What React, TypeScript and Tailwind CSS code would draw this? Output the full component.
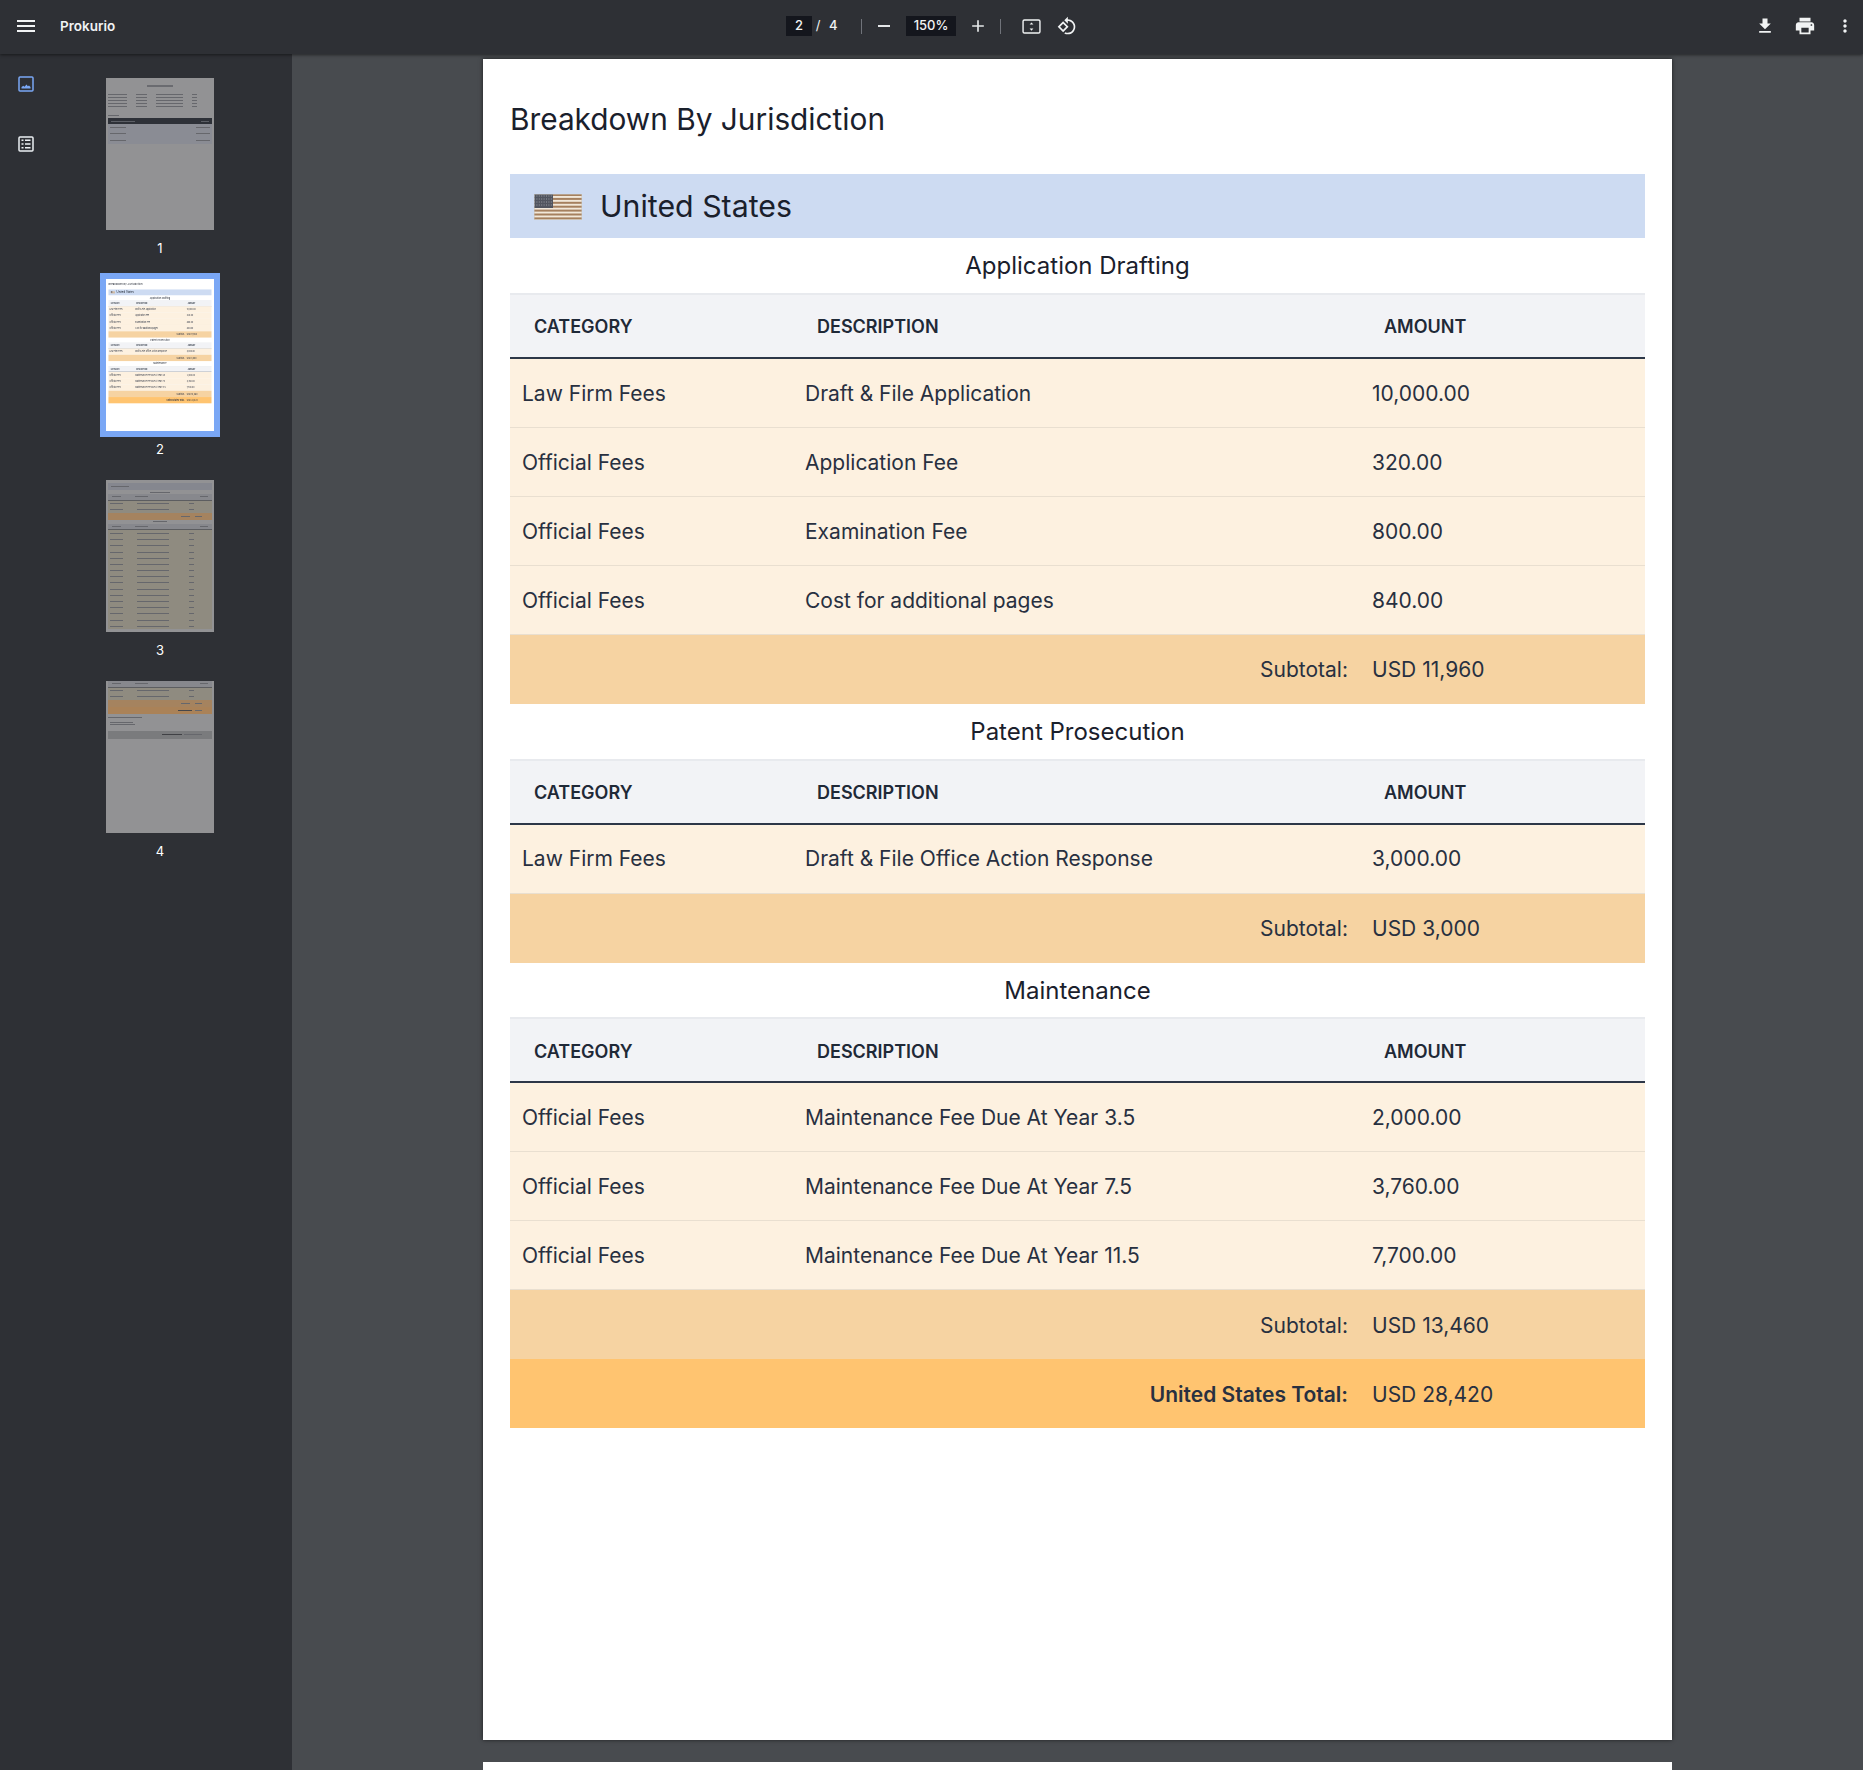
const font = "font-['Inter',sans-serif]";

const sections = [
  {
    title: "Application Drafting",
    rows: [
      ["Law Firm Fees", "Draft & File Application", "10,000.00"],
      ["Official Fees", "Application Fee", "320.00"],
      ["Official Fees", "Examination Fee", "800.00"],
      ["Official Fees", "Cost for additional pages", "840.00"],
    ],
    subtotal: "USD 11,960",
  },
  {
    title: "Patent Prosecution",
    rows: [["Law Firm Fees", "Draft & File Office Action Response", "3,000.00"]],
    subtotal: "USD 3,000",
  },
  {
    title: "Maintenance",
    rows: [
      ["Official Fees", "Maintenance Fee Due At Year 3.5", "2,000.00"],
      ["Official Fees", "Maintenance Fee Due At Year 7.5", "3,760.00"],
      ["Official Fees", "Maintenance Fee Due At Year 11.5", "7,700.00"],
    ],
    subtotal: "USD 13,460",
  },
];

const cols = "grid grid-cols-[283px_567px_285px]";

function Icon({ d, className }: { d: string; className?: string }) {
  return (
    <svg viewBox="0 0 24 24" fill="currentColor" className={className}>
      <path d={d} />
    </svg>
  );
}

function Flag() {
  const stripes = [0, 1, 2, 3, 4, 5, 6];
  return (
    <svg viewBox="0 0 48 26" className="h-[26px] w-[48px] shrink-0">
      <rect width="48" height="26" fill="#f1e8da" />
      {stripes.map((i) => (
        <rect key={i} y={i * 3.9} width="48" height="2" fill="#a5805f" />
      ))}
      <rect width="19" height="14" fill="#51555f" />
      <path d="M0 2h19M0 5h19M0 8h19M0 11h19" stroke="#9a9ca3" strokeWidth="1" strokeDasharray="1 1.4" />
      <rect x="0.25" y="0.25" width="47.5" height="25.5" fill="none" stroke="#c7c4bd" strokeWidth="0.5" />
    </svg>
  );
}

function Section({ title, rows, subtotal }: (typeof sections)[number]) {
  return (
    <div>
      <h3 className="flex h-[54.75px] items-center justify-center pt-[2px] text-[24px] text-[#1a202c]">{title}</h3>
      <div className={`${cols} h-[66px] items-center border-t-2 border-b-2 border-t-[#e8eaee] border-b-[#2d3748] bg-[#f2f3f6] pt-[2px] text-[18px] font-semibold text-[#1f2937]`}>
        <div className="px-6">CATEGORY</div>
        <div className="px-6">DESCRIPTION</div>
        <div className="px-6">AMOUNT</div>
      </div>
      {rows.map((row, i) => (
        <div key={i} className={`${cols} h-[69px] items-center border-b border-[#e9dfd0] bg-[#fdf1e0] pt-[1px] text-[21px] text-[#283040]`}>
          <div className="px-3">{row[0]}</div>
          <div className="px-3">{row[1]}</div>
          <div className="px-3">{row[2]}</div>
        </div>
      ))}
      <div className={`${cols} h-[69px] items-center bg-[#f6d3a2] pt-[1px] text-[21px] text-[#283040]`}>
        <div className="col-span-2 px-3 text-right">Subtotal:</div>
        <div className="px-3">{subtotal}</div>
      </div>
    </div>
  );
}

function Report() {
  return (
    <div className={`h-[1681px] w-[1189px] shrink-0 bg-white px-[27px] pt-[42px] ${font}`}>
      <h1 className="mb-[37px] h-9 text-[29.8px] leading-9 text-[#1a202c]">Breakdown By Jurisdiction</h1>
      <div className="flex h-16 items-center gap-[18px] bg-[#cddbf2] px-6 pt-[2px]">
        <Flag />
        <h2 className="text-[30.3px] text-[#1a202c]">United States</h2>
      </div>
      {sections.map((s) => (
        <Section key={s.title} {...s} />
      ))}
      <div className={`${cols} h-[69px] items-center bg-[#ffc470] pt-[1px] text-[21px] text-[#283040]`}>
        <div className="col-span-2 px-3 text-right font-semibold">United States Total:</div>
        <div className="px-3">USD 28,420</div>
      </div>
    </div>
  );
}

function Bar({ w }: { w: string }) {
  return <div className={`h-px bg-[#66676c] blur-[0.3px] ${w}`} />;
}

function MiniHead() {
  return (
    <div className="flex h-[6.5px] items-center gap-[14px] border-b border-[#5c5d60] bg-[#87888d] px-[4px]">
      <Bar w="w-[10px]" />
      <Bar w="w-[14px]" />
      <div className="ml-[38px] w-[8px]">
        <Bar w="w-[8px]" />
      </div>
    </div>
  );
}

function MiniRow({ h = "h-[6.2px]" }: { h?: string }) {
  return (
    <div className={`flex items-center bg-[#8f8b80] px-[2px] ${h}`}>
      <div className="w-[27px]">
        <Bar w="w-[13px]" />
      </div>
      <div className="w-[52px]">
        <Bar w="w-[32px]" />
      </div>
      <Bar w="w-[5px]" />
    </div>
  );
}

function Thumb1() {
  const fields = [0, 1, 2, 3, 4];
  return (
    <div className="flex h-[152px] w-[108px] flex-col bg-[#929294] px-[2px] pt-[7px]">
      <div className="mb-[6px] flex justify-center">
        <div className="h-[2px] w-[26px] bg-[#6a6b70] blur-[0.4px]" />
      </div>
      {fields.map((i) => (
        <div key={i} className="flex h-[3px] items-center">
          <div className="w-[28px]">
            <Bar w="w-[19px]" />
          </div>
          <div className="w-[20px]">
            <Bar w="w-[11px]" />
          </div>
          <div className="w-[36px]">
            <Bar w="w-[27px]" />
          </div>
          <Bar w="w-[5px]" />
        </div>
      ))}
      <div className="mt-[7px] mb-[2px]">
        <Bar w="w-[11px]" />
      </div>
      <div className="flex h-[6px] items-center justify-between bg-[#2e3138] px-[3px]">
        <div className="h-px w-[24px] bg-[#5c5f66]" />
        <div className="h-px w-[8px] bg-[#5c5f66]" />
      </div>
      <div className="flex h-[20px] flex-col justify-around bg-[#8a8c94] px-[2px]">
        {[0, 1, 2].map((i) => (
          <div key={i} className="flex items-center justify-between">
            <Bar w="w-[16px]" />
            <Bar w="w-[14px]" />
          </div>
        ))}
      </div>
    </div>
  );
}

function Thumb3() {
  const rows = Array.from({ length: 16 }, (_, i) => i);
  return (
    <div className="flex h-[152px] w-[108px] flex-col bg-[#929294] px-[2px] pt-[3px]">
      <div className="flex h-[7px] items-center bg-[#85878f] px-[3px]">
        <Bar w="w-[18px]" />
      </div>
      <div className="flex h-[4px] items-center justify-center">
        <Bar w="w-[20px]" />
      </div>
      <MiniHead />
      <MiniRow />
      <MiniRow />
      <div className="flex h-[7px] items-center justify-end gap-[5px] bg-[#a5835f] px-[10px]">
        <Bar w="w-[9px]" />
        <Bar w="w-[7px]" />
      </div>
      <div className="flex h-[4px] items-center justify-center">
        <Bar w="w-[14px]" />
      </div>
      <MiniHead />
      {rows.map((i) => (
        <MiniRow key={i} />
      ))}
    </div>
  );
}

function Thumb4() {
  return (
    <div className="flex h-[152px] w-[108px] flex-col bg-[#929294] px-[2px]">
      <MiniHead />
      <MiniRow />
      <MiniRow />
      <div className="flex h-[7px] items-center justify-end gap-[5px] bg-[#a5835f] px-[10px]">
        <Bar w="w-[9px]" />
        <Bar w="w-[7px]" />
      </div>
      <div className="flex h-[7px] items-center justify-end gap-[3px] bg-[#aa8258] px-[10px]">
        <div className="h-px w-[14px] bg-[#45464a]" />
        <Bar w="w-[7px]" />
      </div>
      <div className="mt-[3px]">
        <Bar w="w-[34px]" />
      </div>
      <div className="mt-[4px] ml-[2px] flex flex-col gap-[1px]">
        <Bar w="w-[23px]" />
        <Bar w="w-[25px]" />
      </div>
      <div className="mt-[6px] flex h-[8px] items-center justify-end gap-[2px] bg-[#7a7b7d] px-[10px]">
        <div className="h-px w-[20px] bg-[#404145]" />
        <Bar w="w-[18px]" />
      </div>
    </div>
  );
}

function Thumbnail({ label, children }: { label: string; children: React.ReactNode }) {
  return (
    <div className="flex flex-col items-center">
      <div className="overflow-hidden">{children}</div>
      <div className="mt-[9px] h-[18px] text-[13px] leading-[18px] text-white">{label}</div>
    </div>
  );
}

function Sidebar() {
  return (
    <div className={`flex w-[292px] shrink-0 bg-[#2e3035] ${font}`}>
      <div className="flex w-[52px] flex-col items-center gap-[40px] pt-[20px]">
        <svg viewBox="0 0 20 20" className="h-5 w-5 text-[#7aa7f5]" fill="none">
          <rect x="3" y="3" width="14" height="14" rx="1" stroke="currentColor" strokeWidth="1.5" />
          <path d="M5.5 14.5v-1.6l1.8-1.2 1.2 1 2-2.2 1.3 1.8 1.2-.8 1.5 1.4v1.6z" fill="currentColor" />
        </svg>
        <svg viewBox="0 0 20 20" className="h-5 w-5 text-[#eceff3]" fill="none">
          <rect x="3" y="3" width="14" height="14" rx="1" stroke="currentColor" strokeWidth="1.5" />
          <path d="M5.5 6.2h2M9 6.2h5.5M5.5 10h2M9 10h5.5M5.5 13.8h2M9 13.8h5.5" stroke="currentColor" strokeWidth="1.5" />
        </svg>
      </div>
      <div className="flex flex-1 flex-col items-center gap-[22px] pt-[24px] pr-[24px]">
        <Thumbnail label="1">
          <Thumb1 />
        </Thumbnail>
        <div className="flex flex-col items-center">
          <div className="-mt-[6px] border-[6px] border-[#7aa7f5]">
            <div className="h-[152px] w-[108px] overflow-hidden bg-white">
              <div className="origin-top-left scale-[0.0908] blur-[5px]">
                <Report />
              </div>
            </div>
          </div>
          <div className="mt-[3px] h-[18px] text-[13px] leading-[18px] text-white">2</div>
        </div>
        <Thumbnail label="3">
          <Thumb3 />
        </Thumbnail>
        <Thumbnail label="4">
          <Thumb4 />
        </Thumbnail>
      </div>
    </div>
  );
}

function Toolbar() {
  return (
    <div className={`relative z-10 grid h-[54px] shrink-0 grid-cols-[1fr_auto_1fr] items-center bg-[#2e3035] pb-[2px] text-[13px] text-[#f1f3f4] shadow-[0_1px_3px_rgba(0,0,0,0.5)] ${font}`}>
      <div className="flex items-center pl-[14px]">
        <Icon className="h-6 w-6" d="M3 18h18v-2H3v2zm0-5h18v-2H3v2zm0-7v2h18V6H3z" />
        <span className="ml-[22px] text-[13.5px] font-semibold">Prokurio</span>
      </div>
      <div className="flex items-center">
        <div className="flex h-5 w-[26px] items-center justify-center bg-[#14161d] font-medium">2</div>
        <span className="w-[12px] text-center">/</span>
        <span className="ml-[5px] w-[8px] font-medium">4</span>
        <div className="mr-[16px] ml-[24px] h-[15px] w-px bg-[#70737a]" />
        <div className="h-[2px] w-[12px] bg-[#e4e6e8]" />
        <div className="ml-[16px] flex h-5 w-[50px] items-center justify-center bg-[#14161d] font-medium">150%</div>
        <Icon className="mx-[12px] h-5 w-5 text-[#e4e6e8]" d="M19 13h-6v6h-2v-6H5v-2h6V5h2v6h6v2z" />
        <div className="mr-[21px] h-[15px] w-px bg-[#70737a]" />
        <svg viewBox="0 0 20 16" className="h-[15px] w-[19px]" fill="none">
          <rect x="1" y="1" width="18" height="14" rx="1.5" stroke="currentColor" strokeWidth="1.5" />
          <path d="M10 3.6l2 2.2H8zM10 12.4l-2-2.2h4z" fill="currentColor" />
        </svg>
        <Icon className="ml-[16px] h-5 w-5" d="M7.34 6.41L.86 12.9l6.49 6.48 6.49-6.48-6.5-6.49zM3.69 12.9l3.66-3.66L11 12.9l-3.66 3.66-3.65-3.66zm15.67-6.26C17.61 4.88 15.3 4 13 4V.76L8.76 5 13 9.24V6c1.79 0 3.58.68 4.95 2.05 2.73 2.73 2.73 7.17 0 9.9C16.58 19.32 14.79 20 13 20c-.97 0-1.94-.21-2.84-.61l-1.49 1.49C10.02 21.62 11.51 22 13 22c2.3 0 4.61-.88 6.36-2.64 3.52-3.51 3.52-9.21 0-12.72z" />
      </div>
      <div className="flex items-center justify-end pr-[8px]">
        <Icon className="h-5 w-5" d="M19 9h-4V3H9v6H5l7 7 7-7zM5 18v2h14v-2H5z" />
        <Icon className="ml-[19px] h-[22px] w-[22px]" d="M19 8H5c-1.66 0-3 1.34-3 3v6h4v4h12v-4h4v-6c0-1.66-1.34-3-3-3zm-3 11H8v-5h8v5zm3-7c-.55 0-1-.45-1-1s.45-1 1-1 1 .45 1 1-.45 1-1 1zm-1-9H6v4h12V3z" />
        <Icon className="ml-[19px] h-5 w-5" d="M12 8c1.1 0 2-.9 2-2s-.9-2-2-2-2 .9-2 2 .9 2 2 2zm0 2c-1.1 0-2 .9-2 2s.9 2 2 2 2-.9 2-2-.9-2-2-2zm0 6c-1.1 0-2 .9-2 2s.9 2 2 2 2-.9 2-2-.9-2-2-2z" />
      </div>
    </div>
  );
}

export default function App() {
  return (
    <div className="flex h-[1770px] w-[1863px] flex-col overflow-hidden bg-[#484b4f]">
      <Toolbar />
      <div className="flex min-h-0 flex-1">
        <Sidebar />
        <div className="flex flex-1 flex-col items-center gap-[22px] pt-[5px]">
          <div className="shadow-[0_0_4px_rgba(0,0,0,0.6)]">
            <Report />
          </div>
          <div className="h-[200px] w-[1189px] shrink-0 bg-white" />
        </div>
      </div>
    </div>
  );
}
